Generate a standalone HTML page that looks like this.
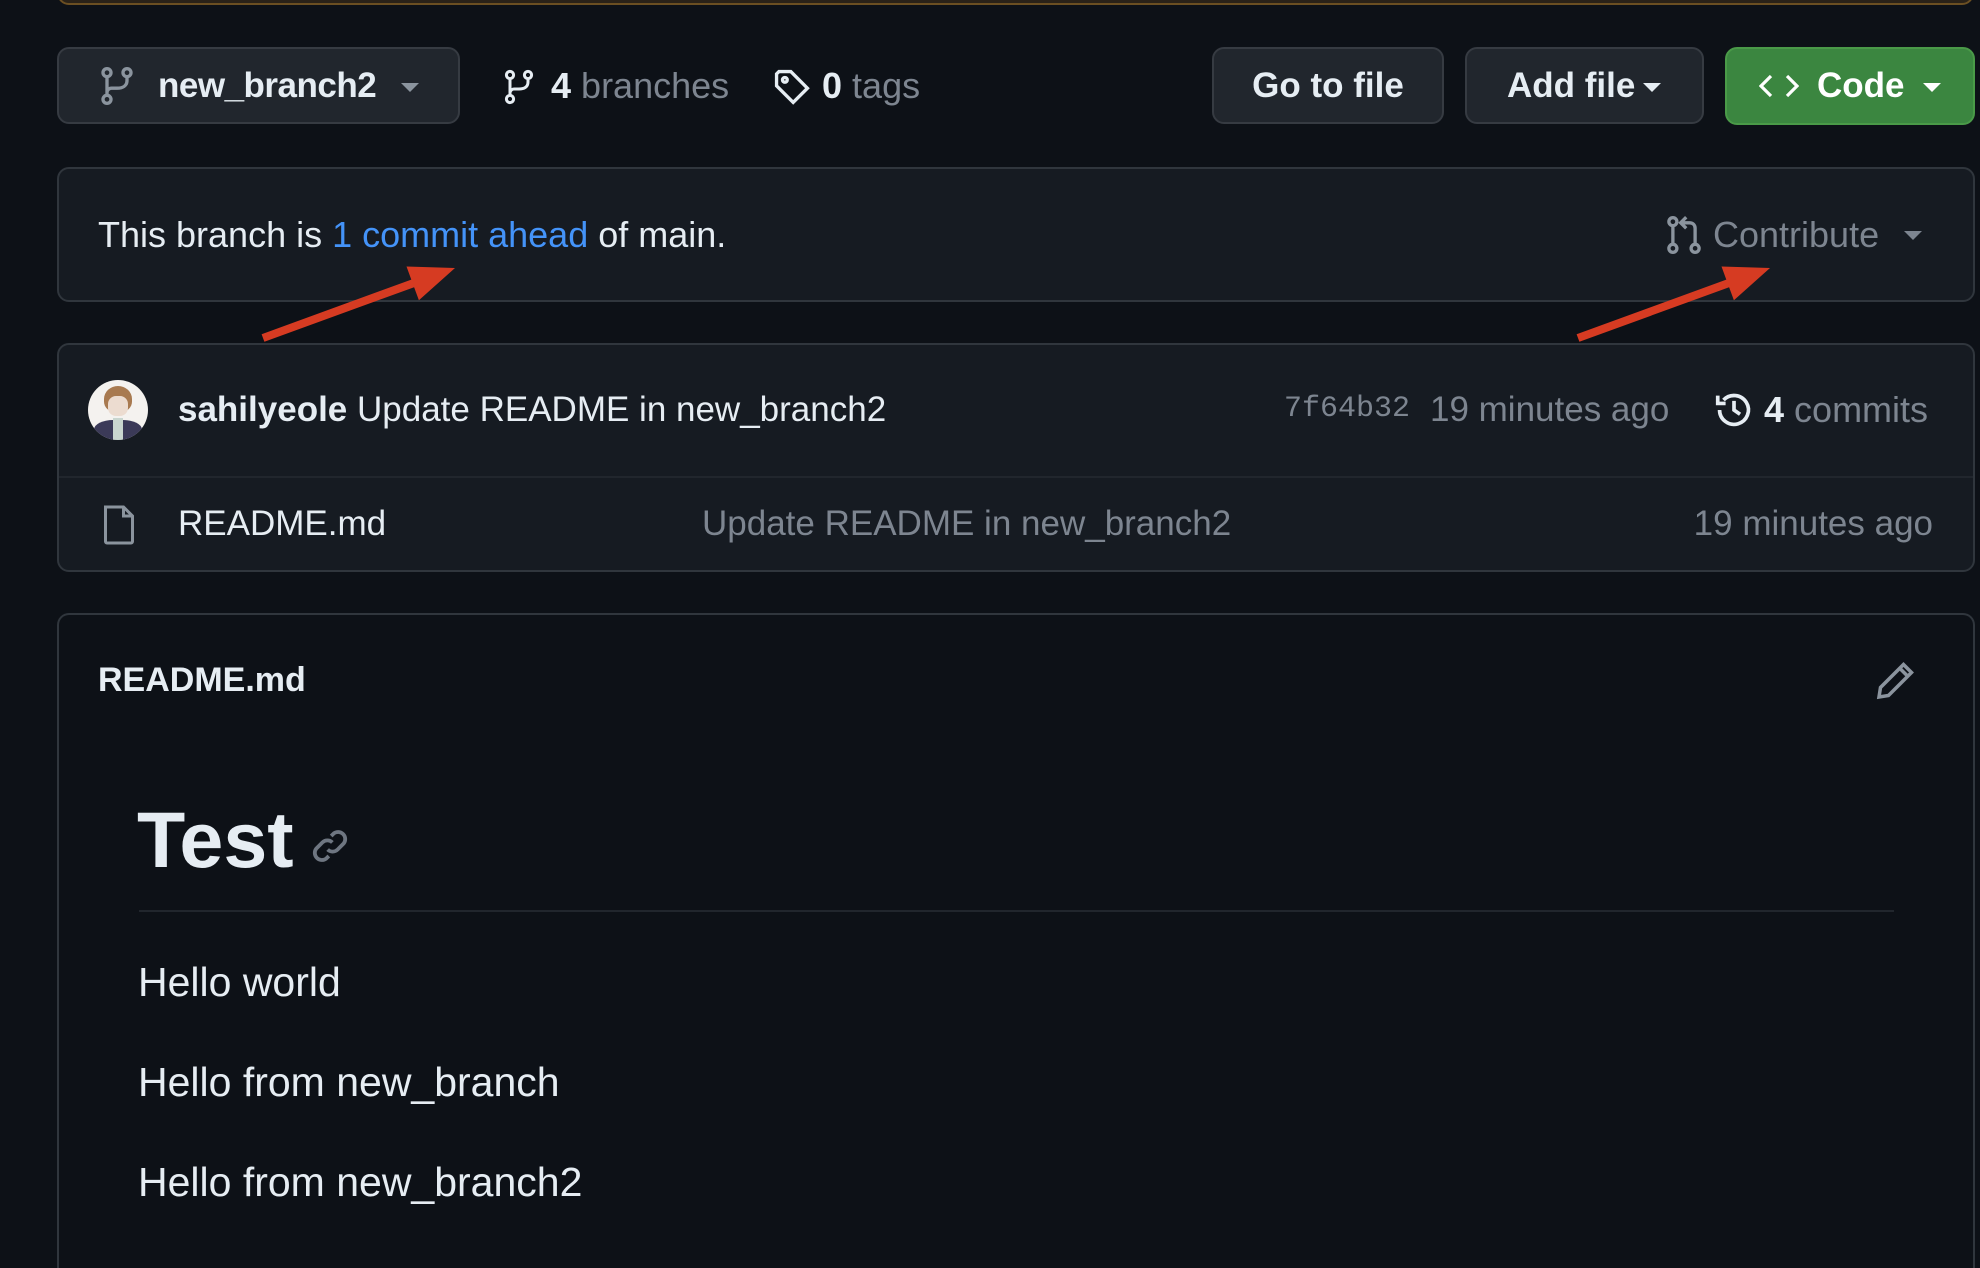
<!DOCTYPE html>
<html style="overflow:hidden"><head><meta charset="utf-8"><style>
*{margin:0;padding:0;box-sizing:border-box}
html,body{width:1980px;height:1268px;overflow:hidden}
body{background:#0d1117;font-family:"Liberation Sans",sans-serif;color:#e6edf3;position:relative}
.a{position:absolute;white-space:nowrap}
.box{position:absolute;border:2px solid #30363d;border-radius:12px}
.btn{position:absolute;background:#21262d;border:2px solid #363b42;border-radius:12px;font-size:35px;line-height:74px;color:#e6edf3}
.m{color:#7d8590}
.t{font-size:35px;line-height:40px}
.car{display:inline-block;width:0;height:0;border-left:9px solid transparent;border-right:9px solid transparent;border-top:9px solid currentColor;vertical-align:middle}
svg{position:absolute}
</style></head><body>
<div class="a" style="left:57px;top:-20px;width:1917px;height:25px;border:2px solid #6b4f22;border-radius:12px;background:#2a2218"></div>

<div class="btn" style="left:57px;top:47px;width:403px;height:77px">
<svg style="left:40px;top:17px" width="36" height="40" viewBox="0 0 16 18" fill="none" stroke="#8b949e" stroke-width="1.5"><circle cx="3.5" cy="3" r="1.8"/><circle cx="3.5" cy="15" r="1.8"/><circle cx="12.5" cy="3" r="1.8"/><path d="M3.5 5v8M12.5 5v1.5c0 2.5-2 3.5-4.5 3.5H5.5c-1 0-2 .8-2 2"/></svg>
<span class="a" style="left:99px;top:0;font-weight:bold;letter-spacing:-0.5px">new_branch2</span>
<span class="a" style="left:342px;top:0;color:#8b949e"><span class="car"></span></span>
</div>
<svg style="left:503px;top:67px" width="32" height="40" viewBox="0 0 16 18" fill="none" stroke="#e6edf3" stroke-width="1.5"><circle cx="3.5" cy="3" r="1.8"/><circle cx="3.5" cy="15" r="1.8"/><circle cx="12.5" cy="3" r="1.8"/><path d="M3.5 5v8M12.5 5v1.5c0 2.5-2 3.5-4.5 3.5H5.5c-1 0-2 .8-2 2"/></svg>
<div class="a t" style="left:551px;top:66px;font-size:36px"><b>4</b> <span class="m">branches</span></div>
<svg style="left:773px;top:67px" width="38" height="40" viewBox="0 0 16 16" fill="none" stroke="#e6edf3" stroke-width="1.4"><path d="M1.5 2.5v5l7 7 6-6-7-7h-5z"/><circle cx="5" cy="5" r="1"/></svg>
<div class="a t" style="left:822px;top:66px;font-size:36px"><b>0</b> <span class="m">tags</span></div>

<div class="btn" style="left:1212px;top:47px;width:232px;height:77px;text-align:center;font-weight:bold">Go to file</div>
<div class="btn" style="left:1465px;top:47px;width:239px;height:77px;font-weight:bold"><span class="a" style="left:40px">Add file</span><span class="a" style="left:176px"><span class="car"></span></span></div>
<div class="btn" style="left:1725px;top:47px;width:250px;height:78px;background:#3b8640;border-color:#4a9a48;font-weight:bold;color:#fff">
<svg style="left:32px;top:22px" width="40" height="30" viewBox="0 0 20 14" fill="none" stroke="#fff" stroke-width="1.6"><path d="M6 2L1 7l5 5M14 2l5 5-5 5"/></svg>
<span class="a" style="left:90px">Code</span><span class="a" style="left:196px"><span class="car"></span></span></div>

<div class="box" style="left:57px;top:167px;width:1918px;height:135px;background:#161b22"></div>
<div class="a t" style="left:98px;top:215px;font-size:36px">This branch is <span style="color:#4493f8">1 commit ahead</span> of main.</div>
<svg style="left:1666px;top:215px" width="36" height="40" viewBox="0 0 16 18" fill="none" stroke="#8b949e" stroke-width="1.5"><circle cx="3" cy="3" r="1.8"/><circle cx="3" cy="15" r="1.8"/><circle cx="13" cy="15" r="1.8"/><path d="M3 5v8M13 13V6c0-1.5-1-2.5-2.5-2.5H7M9 1L6.5 3.5 9 6"/></svg>
<div class="a t m" style="left:1713px;top:215px;font-size:36px">Contribute</div>
<div class="a m" style="left:1904px;top:227px"><span class="car"></span></div>

<div class="box" style="left:57px;top:343px;width:1918px;height:229px;background:#161b22"></div>
<div class="a" style="left:59px;top:476px;width:1914px;height:2px;background:#21262d"></div>
<div class="a" style="left:88px;top:380px;width:60px;height:60px;border-radius:50%;overflow:hidden;background:#f4f2ef">
<div class="a" style="left:16px;top:6px;width:28px;height:26px;border-radius:50% 50% 40% 40%;background:#a87a50"></div>
<div class="a" style="left:20px;top:16px;width:20px;height:20px;border-radius:40%;background:#ecdcd0"></div>
<div class="a" style="left:6px;top:40px;width:48px;height:24px;border-radius:40% 40% 0 0;background:#3b3a58"></div>
<div class="a" style="left:25px;top:38px;width:10px;height:22px;background:#c9d6cf"></div>
</div>
<div class="a t" style="left:178px;top:390px"><b>sahilyeole</b> Update README in new_branch2</div>
<div class="a m" style="left:1284px;top:392px;font-family:'Liberation Mono',monospace;font-size:30px">7f64b32</div>
<div class="a t m" style="left:1430px;top:390px">19 minutes ago</div>
<svg style="left:1713px;top:389px" width="42" height="42" viewBox="0 0 16 16" fill="none" stroke="#e6edf3" stroke-width="1.4"><path d="M2.5 8A5.5 5.5 0 1 0 4 4.2"/><path d="M1.8 2.5v3h3"/><path d="M8 4.5V8l2.3 1.6"/></svg>
<div class="a t" style="left:1764px;top:390px;font-size:36px"><b>4</b> <span class="m">commits</span></div>
<svg style="left:101px;top:504px" width="36" height="42" viewBox="0 0 12 14" fill="none" stroke="#8b949e" stroke-width="1"><path d="M1.5 1h6l3 3v8.5a.5.5 0 0 1-.5.5H2a.5.5 0 0 1-.5-.5V1.5z"/><path d="M7.5 1v3h3"/></svg>
<div class="a t" style="left:178px;top:504px">README.md</div>
<div class="a t m" style="left:702px;top:504px">Update README in new_branch2</div>
<div class="a t m" style="left:1690px;top:504px;width:243px;text-align:right">19 minutes ago</div>

<div class="box" style="left:57px;top:613px;width:1918px;height:680px;border-bottom:none"></div>
<div class="a" style="left:98px;top:660px;font-size:34px;font-weight:bold;line-height:40px">README.md</div>
<svg style="left:1876px;top:660px" width="40" height="40" viewBox="0 0 16 16" fill="none" stroke="#8b949e" stroke-width="1.4"><path d="M11 1.8l3.2 3.2L5 14.2l-3.8.6.6-3.8z"/><path d="M9.5 3.3l3.2 3.2"/></svg>
<div class="a" style="left:137px;top:795px;font-size:79px;font-weight:bold;line-height:90px">Test</div>
<svg style="left:311px;top:827px" width="38" height="38" viewBox="0 0 16 16" fill="none" stroke="#6e7681" stroke-width="1.6"><path d="M7 9.5a3 3 0 0 0 4.2 0l2.6-2.6a3 3 0 0 0-4.2-4.2L8.5 3.8"/><path d="M9 6.5a3 3 0 0 0-4.2 0L2.2 9.1a3 3 0 0 0 4.2 4.2l1.1-1.1"/></svg>
<div class="a" style="left:139px;top:910px;width:1755px;height:2px;background:#21262d"></div>
<div class="a" style="left:138px;top:959px;font-size:41px;line-height:46px">Hello world</div>
<div class="a" style="left:138px;top:1059px;font-size:41px;line-height:46px">Hello from new_branch</div>
<div class="a" style="left:138px;top:1159px;font-size:41px;line-height:46px">Hello from new_branch2</div>

<svg style="left:0;top:0" width="1980" height="1268"><g fill="#d63b22">
<polygon points="261.6,334.2 411.3,279.6 406.5,266.5 455,268 418.9,300.3 414.1,287.2 264.4,341.8"/>
<polygon points="1576.6,334.2 1726.3,279.6 1721.5,266.5 1770,268 1733.9,300.3 1729.1,287.2 1579.4,341.8"/>
</g></svg>
</body></html>
